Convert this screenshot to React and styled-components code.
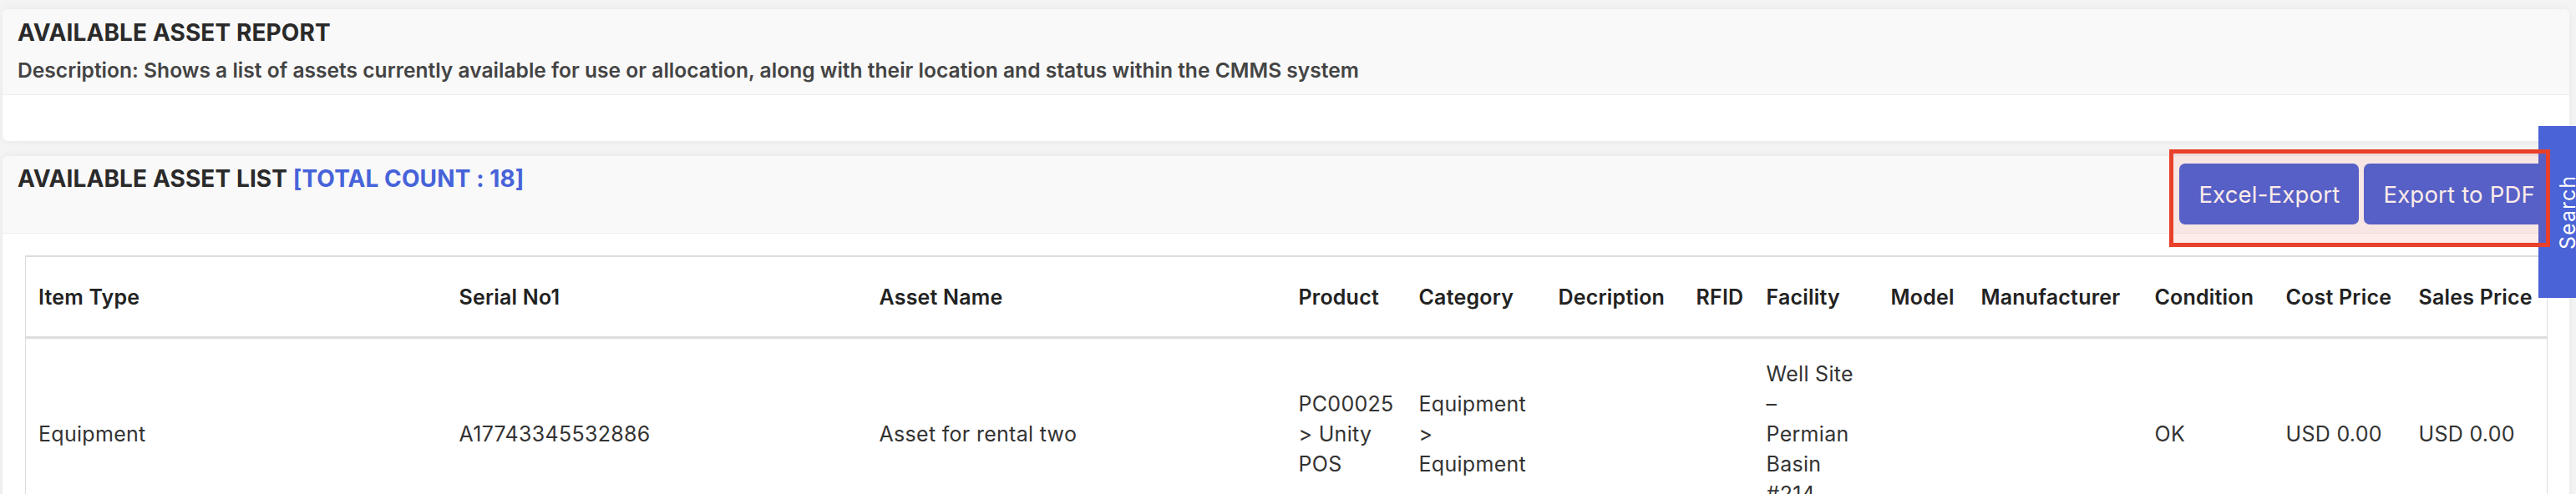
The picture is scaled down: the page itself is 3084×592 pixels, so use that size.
import React from 'react';
import styled, { createGlobalStyle } from 'styled-components';

const GlobalStyle = createGlobalStyle`
  *, *::before, *::after { box-sizing: border-box; }
  html, body { margin: 0; padding: 0; background: #f4f4f5; }
  body { font-family: Inter, "Noto Sans", sans-serif; color: #333; }
`;

const Page = styled.div`
  display: flex;
  flex-direction: column;
  gap: 18px;
  padding: 11px 8px 0 3px;
`;

const Card = styled.section`
  background: #fff;
  border-radius: 7px;
  box-shadow: 0 0 12px rgba(0, 0, 0, 0.06);
`;

const ReportHeader = styled.div`
  background: #f9f9f9;
  border-radius: 7px 7px 0 0;
  border-bottom: 1px solid #ededf5;
  padding: 11px 18px 14px;
`;

const Title = styled.h1`
  margin: 0;
  font-size: 28px;
  line-height: 34px;
  font-weight: 700;
  color: #2a2a2a;
  letter-spacing: 0.1px;
`;

const ReportTitle = styled(Title)`
  margin-bottom: 13px;
`;

const Description = styled.p`
  margin: 0;
  font-size: 24.6px;
  line-height: 30px;
  font-weight: 600;
  color: #444;
`;

const EmptyBody = styled.div`
  height: 55px;
`;

const ListHeader = styled.div`
  display: flex;
  justify-content: space-between;
  align-items: flex-start;
  background: #f9f9f9;
  border-radius: 7px 7px 0 0;
  border-bottom: 1px solid #eeeeee;
  padding: 9px 18px 10px;
`;

const ListTitle = styled(Title)`
  margin-top: 1px;
`;

const Count = styled.span`
  color: #4763d9;
`;

const ButtonGroup = styled.div`
  position: relative;
  display: flex;
  gap: 6px;
`;

const ExportButton = styled.button`
  height: 73px;
  padding: 0 23px;
  border: none;
  border-radius: 7px;
  background: #4764d9;
  color: #fff;
  font-family: Inter, "Noto Sans", sans-serif;
  font-size: 27.5px;
  font-weight: 400;
  letter-spacing: 0.2px;
  cursor: pointer;
`;

const Annotation = styled.div`
  position: absolute;
  top: -17px;
  left: -12px;
  width: 456px;
  height: 117px;
  border: 5px solid #e8402a;
  background: rgba(232, 64, 42, 0.1);
  pointer-events: none;
  z-index: 30;
`;

const ListBody = styled.div`
  padding: 26px 27px 0;
`;

const Table = styled.table`
  width: 100%;
  border-collapse: collapse;
  table-layout: fixed;
  border-top: 2px solid #dddddd;
  border-left: 1px solid #dddddd;
  border-right: 1px solid #dddddd;
`;

const Th = styled.th`
  text-align: left;
  padding: 30px 8px 29px 15px;
  font-size: 25px;
  line-height: 36px;
  font-weight: 600;
  color: #222;
  letter-spacing: 0.2px;
  white-space: nowrap;
  border-bottom: 3px solid #dddddd;
`;

const Td = styled.td`
  padding: 24px 20px 24px 15px;
  font-size: 25px;
  line-height: 36px;
  font-weight: 400;
  color: #333;
  letter-spacing: 0.3px;
  vertical-align: middle;
`;

const SearchTab = styled.div`
  position: fixed;
  top: 151px;
  right: -25px;
  width: 70px;
  height: 206px;
  background: #4a63d6;
  display: flex;
  align-items: center;
  justify-content: center;
  z-index: 20;
`;

const SearchLabel = styled.span`
  writing-mode: vertical-rl;
  transform: rotate(180deg);
  color: #fff;
  font-size: 25px;
  letter-spacing: 1px;
`;

const columns = [
  { label: 'Item Type', width: 504, key: 'itemType' },
  { label: 'Serial No1', width: 503, key: 'serial' },
  { label: 'Asset Name', width: 502, key: 'name' },
  { label: 'Product', width: 144, key: 'product' },
  { label: 'Category', width: 167, key: 'category' },
  { label: 'Decription', width: 165, key: 'description' },
  { label: 'RFID', width: 84, key: 'rfid' },
  { label: 'Facility', width: 149, key: 'facility' },
  { label: 'Model', width: 108, key: 'model' },
  { label: 'Manufacturer', width: 208, key: 'manufacturer' },
  { label: 'Condition', width: 157, key: 'condition' },
  { label: 'Cost Price', width: 159, key: 'cost' },
  { label: 'Sales Price', width: 169, key: 'sales' },
];

const rows = [
  {
    itemType: 'Equipment',
    serial: 'A17743345532886',
    name: 'Asset for rental two',
    product: 'PC00025 > Unity POS',
    category: 'Equipment > Equipment',
    description: '',
    rfid: '',
    facility: 'Well Site – Permian Basin #214',
    model: '',
    manufacturer: '',
    condition: 'OK',
    cost: 'USD 0.00',
    sales: 'USD 0.00',
  },
];

export default function App() {
  return (
    <>
      <GlobalStyle />
      <Page>
        <Card>
          <ReportHeader>
            <ReportTitle>AVAILABLE ASSET REPORT</ReportTitle>
            <Description>
              Description: Shows a list of assets currently available for use or allocation, along with their location and status within the CMMS system
            </Description>
          </ReportHeader>
          <EmptyBody />
        </Card>
        <Card>
          <ListHeader>
            <ListTitle>
              AVAILABLE ASSET LIST <Count>[TOTAL COUNT : 18]</Count>
            </ListTitle>
            <ButtonGroup>
              <ExportButton>Excel-Export</ExportButton>
              <ExportButton>Export to PDF</ExportButton>
              <Annotation />
            </ButtonGroup>
          </ListHeader>
          <ListBody>
            <Table>
              <colgroup>
                {columns.map((c) => (
                  <col key={c.key} style={{ width: c.width }} />
                ))}
              </colgroup>
              <thead>
                <tr>
                  {columns.map((c) => (
                    <Th key={c.key}>{c.label}</Th>
                  ))}
                </tr>
              </thead>
              <tbody>
                {rows.map((r, i) => (
                  <tr key={i}>
                    {columns.map((c) => (
                      <Td key={c.key}>{r[c.key]}</Td>
                    ))}
                  </tr>
                ))}
              </tbody>
            </Table>
          </ListBody>
        </Card>
      </Page>
      <SearchTab>
        <SearchLabel>Search</SearchLabel>
      </SearchTab>
    </>
  );
}
